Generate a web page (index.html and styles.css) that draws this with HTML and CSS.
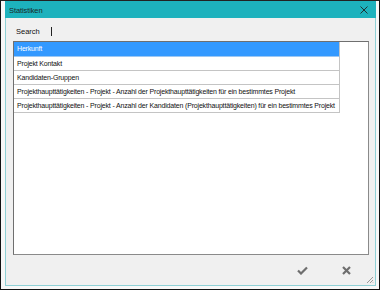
FILE: index.html
```html
<!DOCTYPE html>
<html lang="de">
<head>
    <meta charset="UTF-8">
    <title>Statistiken</title>
    <link rel="stylesheet" href="styles.css">
</head>
<body>
    <div class="desktop">
        <div class="window">
            <div class="title-bar">
                <span class="title">Statistiken</span>
                <svg class="close-icon" width="8" height="8" viewBox="0 0 8 8">
                    <path d="M0.5 0.5 L7.5 7.5 M7.5 0.5 L0.5 7.5" stroke="#1f3234" stroke-width="1" fill="none"/>
                </svg>
            </div>

            <div class="search-row">
                <span class="search-label">Search</span>
                <span class="caret"></span>
            </div>

            <div class="list-box">
                <div class="list-item selected">Herkunft</div>
                <div class="list-item">Projekt Kontakt</div>
                <div class="list-item">Kandidaten-Gruppen</div>
                <div class="list-item">Projekthaupttätigkeiten - Projekt - Anzahl der Projekthaupttätigkeiten für ein bestimmtes Projekt</div>
                <div class="list-item">Projekthaupttätigkeiten - Projekt - Anzahl der Kandidaten (Projekthaupttätigkeiten) für ein bestimmtes Projekt</div>
            </div>

            <div class="footer">
                <svg class="btn-icon" width="11" height="9" viewBox="0 0 11 9">
                    <path d="M1 4.5 L4 7.5 L10 1.5" stroke="#6e6e6e" stroke-width="2.2" fill="none"/>
                </svg>
                <svg class="btn-icon" width="9" height="9" viewBox="0 0 9 9">
                    <path d="M1 1 L8 8 M8 1 L1 8" stroke="#6e6e6e" stroke-width="2.2" fill="none"/>
                </svg>
            </div>

            <svg class="grip" width="8" height="8" viewBox="0 0 8 8">
                <path d="M7 1 L1 7 M7 4 L4 7 M7 6.5 L6.5 7" stroke="#9a9a9a" stroke-width="1" fill="none"/>
            </svg>
        </div>
    </div>
</body>
</html>
```

FILE: styles.css
```css
* {
    box-sizing: border-box;
}

body {
    margin: 0;
    width: 380px;
    height: 291px;
    background-color: #ffffff;
    font-family: "Liberation Sans", Arial, sans-serif;
}

.desktop {
    height: 290px;
    border: 1px solid #111;
    border-top: 1px solid #222;
    background-color: #f7f7f7;
    padding: 0 3px 3px 4px;
}

.window {
    position: relative;
    height: 285px;
    border: 1px solid #8fd0d5;
    border-top: none;
    background-color: #f0f0f0;
    display: flex;
    flex-direction: column;
}

.title-bar {
    height: 17px;
    margin: 0 -1px;
    background-color: #1db2bd;
    display: flex;
    align-items: center;
    justify-content: space-between;
    padding: 1px 8px 0 4px;
}

.title {
    font-size: 7.5px;
    letter-spacing: -0.1px;
    color: #1a2829;
}

.close-icon {
    display: block;
}

.search-row {
    height: 23px;
    display: flex;
    align-items: center;
    padding: 3px 0 0 10px;
}

.search-label {
    font-size: 7.5px;
    color: #111;
}

.caret {
    width: 1px;
    height: 9px;
    margin-left: 11px;
    background-color: #222;
}

.list-box {
    height: 214px;
    margin: 0 6px 0 7px;
    background-color: #fff;
    border: 1px solid #6f6f6f;
    border-right-color: #8a8a8a;
    border-bottom-color: #8a8a8a;
}

.list-item {
    width: 326px;
    height: 14px;
    line-height: 13px;
    padding-left: 3px;
    font-size: 7px;
    letter-spacing: -0.17px;
    color: #111;
    white-space: nowrap;
    border-right: 1px solid #c4c4c4;
    border-bottom: 1px solid #c4c4c4;
}

.list-item.selected {
    height: 15px;
    line-height: 14px;
    background-color: #3399ff;
    border-bottom-color: #9cc7f3;
    color: #fff;
}

.footer {
    flex: 1;
    display: flex;
    align-items: center;
    justify-content: flex-end;
    gap: 34px;
    padding: 0 24px 0 0;
}

.btn-icon {
    display: block;
}

.grip {
    position: absolute;
    right: 1px;
    bottom: 1px;
}
```
